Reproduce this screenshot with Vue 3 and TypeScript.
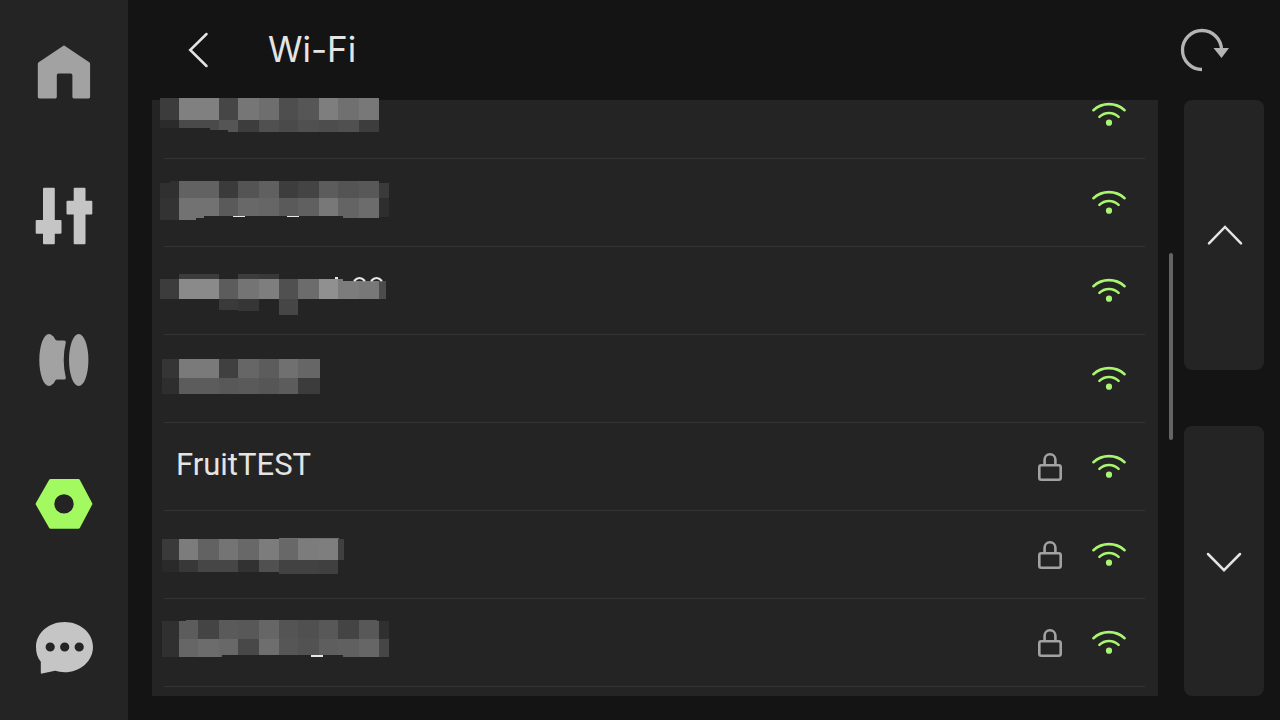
<script setup lang="ts">
import { computed, ref } from 'vue'

type Shade = [x: number, y: number, width: number, height: number, level: string]

interface Network {
  id: number
  name?: string
  secured: boolean
  mask?: Shade[]
  marks?: string
}

const edges = [0, 19, 38, 59, 78, 99, 119, 138, 159, 178, 199, 219, 229]
const panel = '24'

/* One horizontal strip of mosaic tiles; levels are two-digit grey values, one per column. */
function strip(top: number, bottom: number, levels: string, left = 0, right = 229): Shade[] {
  return levels.split(' ').map((level, i) => {
    const x = Math.max(edges[i], left)
    return [x, top, Math.min(edges[i + 1], right) - x, bottom - top, level] as Shade
  })
}

const networks: Network[] = [
  {
    id: 1,
    secured: false,
    mask: [
      ...strip(27, 49, '3c 80 80 46 76 6e 4e 56 7e 70 78'),
      ...strip(49, 61, '2b 4a 4a 55 3d 50 4a 50 4d 50 3d'),
      [0, 57, 50, 4, panel],
      [50, 59, 18, 2, panel],
    ],
  },
  {
    id: 2,
    secured: false,
    mask: [
      ...strip(22, 39, '30 62 62 3b 54 60 3d 44 5c 54 58 3a'),
      ...strip(39, 61, '33 72 72 5a 68 66 5a 60 78 64 6c 2e'),
      [0, 22, 10, 2, panel],
      [219, 22, 10, 2, panel],
      [36, 59, 8, 2, panel],
      [44, 57, 139, 4, panel],
      [183, 59, 46, 2, panel],
      [219, 58, 10, 3, panel],
      [73, 57, 12, 1, 'e8'],
      [127, 57, 12, 1, 'e8'],
    ],
  },
  {
    id: 3,
    secured: false,
    mask: [
      ...strip(27, 32, '24 3c 3c 24 3c 38'),
      ...strip(32, 52, '3c 8a 8a 5c 74 7e 50 6c 90 7c 78 4c', 0, 226),
      [59, 52, 19, 11, '3a'],
      [78, 52, 21, 12, '36'],
      [119, 52, 19, 16, '46'],
      [183, 32, 43, 2, panel],
      [175, 30, 3, 2, 'e8'],
    ],
    marks: 'M194 34q5.500-6 11 0M211 34q5.500-6 11 0',
  },
  {
    id: 4,
    secured: false,
    mask: [
      ...strip(24, 43, '35 7a 7a 40 66 5c 70 66', 2, 160),
      ...strip(43, 59, '2e 5c 5c 58 5a 56 5c 3c', 2, 160),
      [159, 24, 1, 19, '66'],
      [159, 43, 1, 16, '3c'],
    ],
  },
  { id: 5, name: 'FruitTEST', secured: true },
  {
    id: 6,
    secured: true,
    mask: [
      ...strip(28, 49, '3a 7c 62 74 68 7c 68 7c 7e 40', 2, 184),
      ...strip(49, 63, '2a 38 46 46 32 50 42 42 40', 2, 179),
      [119, 27, 60, 1, '70'],
      [2, 61, 117, 2, panel],
    ],
  },
  {
    id: 7,
    secured: true,
    mask: [
      ...strip(21, 40, '30 5c 44 5a 58 66 54 50 58 44 58 30', 2),
      ...strip(40, 58, '30 66 6c 68 48 6e 56 52 5e 60 66 46', 2),
      [2, 21, 24, 1, panel],
      [217, 21, 12, 1, panel],
      [62, 56, 121, 2, panel],
      [151, 56, 12, 2, 'e8'],
    ],
  },
]

const tabs = ['Home', 'Controls', 'Filament', 'Settings', 'Assistant']
const active = ref('Settings')

const scroll = { before: 153, size: 187, after: 256 }
const trackRows = computed(() => `${scroll.before}fr ${scroll.size}fr ${scroll.after}fr`)
</script>

<template>
  <div class="screen">
    <nav class="sidebar">
      <button
        v-for="tab in tabs"
        :key="tab"
        type="button"
        class="tab"
        :class="[tab.toLowerCase(), { active: active === tab }]"
        :aria-label="tab"
        @click="active = tab"
      >
        <svg width="64" height="64" viewBox="0 0 64 64" fill="currentColor" aria-hidden="true">
          <path
            v-if="tab === 'Home'"
            d="M31 5.9q1-.8 2 0L57.2 22.2q.9.6.9 1.6V57q0 1.4-1.4 1.4H41.8q-1.4 0-1.4-1.4V35.2q0-1.6-1.6-1.6H26.4q-1.6 0-1.6 1.6V57q0 1.4-1.4 1.4H7.2q-1.4 0-1.4-1.4V23.800q0-1 .9-1.600z"
          />
          <g v-else-if="tab === 'Controls'">
            <rect x="11" y="3.7" width="11.8" height="56.6" rx="1" />
            <rect x="3.7" y="36" width="25.8" height="13.8" rx="1" />
            <rect x="41.7" y="3.7" width="11.8" height="56.6" rx="1" />
            <rect x="34.5" y="16.8" width="25.8" height="13.8" rx="1" />
          </g>
          <g v-else-if="tab === 'Filament'">
            <ellipse cx="17" cy="32" rx="9.7" ry="26" />
            <path
              d="M17 7L21.500 8.500C22.600 10.600 23.400 12.400 25 12.400H32q2.200 0 1.800 2.200-4.200 17.400 0 34.800.4 2.200-1.800 2.200H25c-1.600 0-2.400 1.800-3.500 3.900L17 57z"
            />
            <ellipse cx="46.7" cy="32" rx="9.7" ry="26" />
          </g>
          <path
            v-else-if="tab === 'Settings'"
            fill-rule="evenodd"
            d="M18.600 7h27.800q.9 0 1.400.8L60.100 31q.5.900 0 1.800L47.800 55.900q-.5.800-1.400.8H18.600q-.9 0-1.400-.8L3.900 32.800q-.5-.9 0-1.800L17.200 7.800q.5-.8 1.400-.8zM32 22.200a9.700 9.700 0 1 0 0 19.400 9.700 9.700 0 0 0 0-19.400z"
          />
          <path
            v-else
            fill-rule="evenodd"
            d="M32.500 6C48.300 6 61 17 61 31S48.300 56.300 32.500 56.300c-3.600 0-6.500-.8-9.300-1.500L10 57.600q-1.200.3-1.200-.9V45.800C5.400 41.400 4 36.800 4 31 4 17 16.700 6 32.500 6zM18.200 26.400a4.600 4.600 0 1 0 0 9.200 4.600 4.600 0 0 0 0-9.200zM32.700 26.400a4.600 4.600 0 1 0 0 9.200 4.600 4.600 0 0 0 0-9.200zM47.200 26.400a4.600 4.600 0 1 0 0 9.200 4.600 4.600 0 0 0 0-9.200z"
          />
        </svg>
      </button>
    </nav>

    <main class="main">
      <header class="header">
        <button type="button" class="icon-button" aria-label="Back">
          <svg width="40" height="40" viewBox="0 0 40 40" fill="none" stroke="currentColor" stroke-width="2.5" aria-hidden="true">
            <path d="M30.500 4 14.200 20l16.300 16" stroke-linecap="round" />
          </svg>
        </button>
        <h1 class="title">Wi-Fi</h1>
        <button type="button" class="icon-button refresh" aria-label="Refresh">
          <svg width="56" height="56" viewBox="0 0 56 56" fill="none" aria-hidden="true">
            <path d="M26 47.500A19.500 19.500 0 1 1 45.500 28" stroke="currentColor" stroke-width="3.300" />
            <path d="M37.500 26h15.500L45.500 36z" fill="currentColor" />
          </svg>
        </button>
      </header>

      <div class="body">
        <section class="panel">
          <ul class="list">
            <li v-for="network in networks" :key="network.id" class="row">
              <span v-if="network.name" class="name">{{ network.name }}</span>
              <svg v-else class="mask" width="232" height="88" viewBox="0 0 232 88" shape-rendering="crispEdges" aria-hidden="true">
                <rect
                  v-for="([x, y, w, h, level], i) in network.mask"
                  :key="i"
                  :x="x"
                  :y="y"
                  :width="w"
                  :height="h"
                  :fill="`#${level}${level}${level}`"
                />
                <path v-if="network.marks" :d="network.marks" class="marks" />
              </svg>
              <span class="status">
                <svg v-if="network.secured" class="lock" width="40" height="40" viewBox="0 0 40 40" fill="none" stroke="currentColor" stroke-width="2.600" role="img" aria-label="Secured">
                  <rect x="9.300" y="18.300" width="21.400" height="14.400" rx="2" />
                  <path d="M14.600 18v-5.300a5.400 5.400 0 0 1 10.800 0V18" />
                </svg>
                <svg class="wifi" width="40" height="40" viewBox="0 0 40 40" fill="none" stroke="currentColor" stroke-width="2.600" stroke-linecap="round" role="img" aria-label="Strong signal">
                  <path d="M4.400 15.200a23.200 23.200 0 0 1 31.200 0M10.400 21.900a13.600 13.600 0 0 1 19.200 0" />
                  <circle cx="20" cy="27.700" r="3.100" fill="currentColor" stroke="none" />
                </svg>
              </span>
            </li>
          </ul>
        </section>

        <div class="track" :style="{ gridTemplateRows: trackRows }">
          <div class="thumb"></div>
        </div>

        <div class="pager">
          <button type="button" class="page" aria-label="Scroll up">
            <svg width="40" height="40" viewBox="0 0 40 40" fill="none" stroke="currentColor" stroke-width="2.500" stroke-linecap="round" aria-hidden="true">
              <path d="M5 28.400 21 12l16 16.400" />
            </svg>
          </button>
          <button type="button" class="page" aria-label="Scroll down">
            <svg width="40" height="40" viewBox="0 0 40 40" fill="none" stroke="currentColor" stroke-width="2.500" stroke-linecap="round" aria-hidden="true">
              <path d="M4 13 20 29.200l16-16.200" />
            </svg>
          </button>
        </div>
      </div>
    </main>
  </div>
</template>

<style>
body {
  background: #141414;
}
</style>

<style scoped>
.screen {
  display: grid;
  grid-template-columns: 128px 1fr;
  min-height: 100vh;
  background: #141414;
  color: #e4e4e4;
  font-family: Roboto, "Noto Sans", sans-serif;
}

button {
  display: flex;
  align-items: center;
  justify-content: center;
  padding: 0;
  border: 0;
  background: none;
  color: inherit;
  cursor: pointer;
}

.sidebar {
  display: grid;
  grid-auto-rows: 1fr;
  background: #242424;
}

.tab {
  color: #a2a2a2;
}

.controls,
.assistant {
  color: #c5c5c5;
}

.active {
  color: #a2fa60;
}

.main {
  display: flex;
  flex-direction: column;
  min-width: 0;
}

.header {
  display: flex;
  align-items: center;
  height: 100px;
  padding: 0 48px;
}

.title {
  flex: 1;
  margin: 0 0 0 52px;
  padding-bottom: 2px;
  font-family: Inter, sans-serif;
  font-size: 35px;
  font-weight: 400;
  line-height: 40px;
}

.refresh {
  color: #b4b4b4;
}

.body {
  display: flex;
  flex: 1;
  padding: 0 16px 24px 24px;
}

.panel {
  flex: 1;
  min-width: 0;
  padding: 0 13px 0 12px;
  background: #242424;
}

.list {
  margin: -29px 0 0;
  padding: 0 0 9px;
  list-style: none;
}

.row {
  display: flex;
  align-items: center;
  justify-content: space-between;
  height: 88px;
  padding: 0 16px 0 12px;
  box-shadow: inset 0 -1px #343434;
}

.name {
  font-size: 31px;
  line-height: 36px;
  padding-bottom: 4px;
}

.mask {
  margin-left: -16px;
}

.marks {
  fill: none;
  stroke: #e8e8e8;
  stroke-width: 2px;
  shape-rendering: auto;
}

.status {
  display: flex;
  gap: 19px;
}

.lock {
  color: #a2a2a2;
}

.wifi {
  color: #aaf570;
}

.track {
  display: grid;
  justify-content: center;
  width: 26px;
}

.thumb {
  grid-row: 2;
  width: 4px;
  border-radius: 2px;
  background: #646464;
}

.pager {
  display: flex;
  flex-direction: column;
  gap: 56px;
  width: 80px;
}

.page {
  flex: 1;
  border-radius: 8px;
  background: #242424;
}
</style>
